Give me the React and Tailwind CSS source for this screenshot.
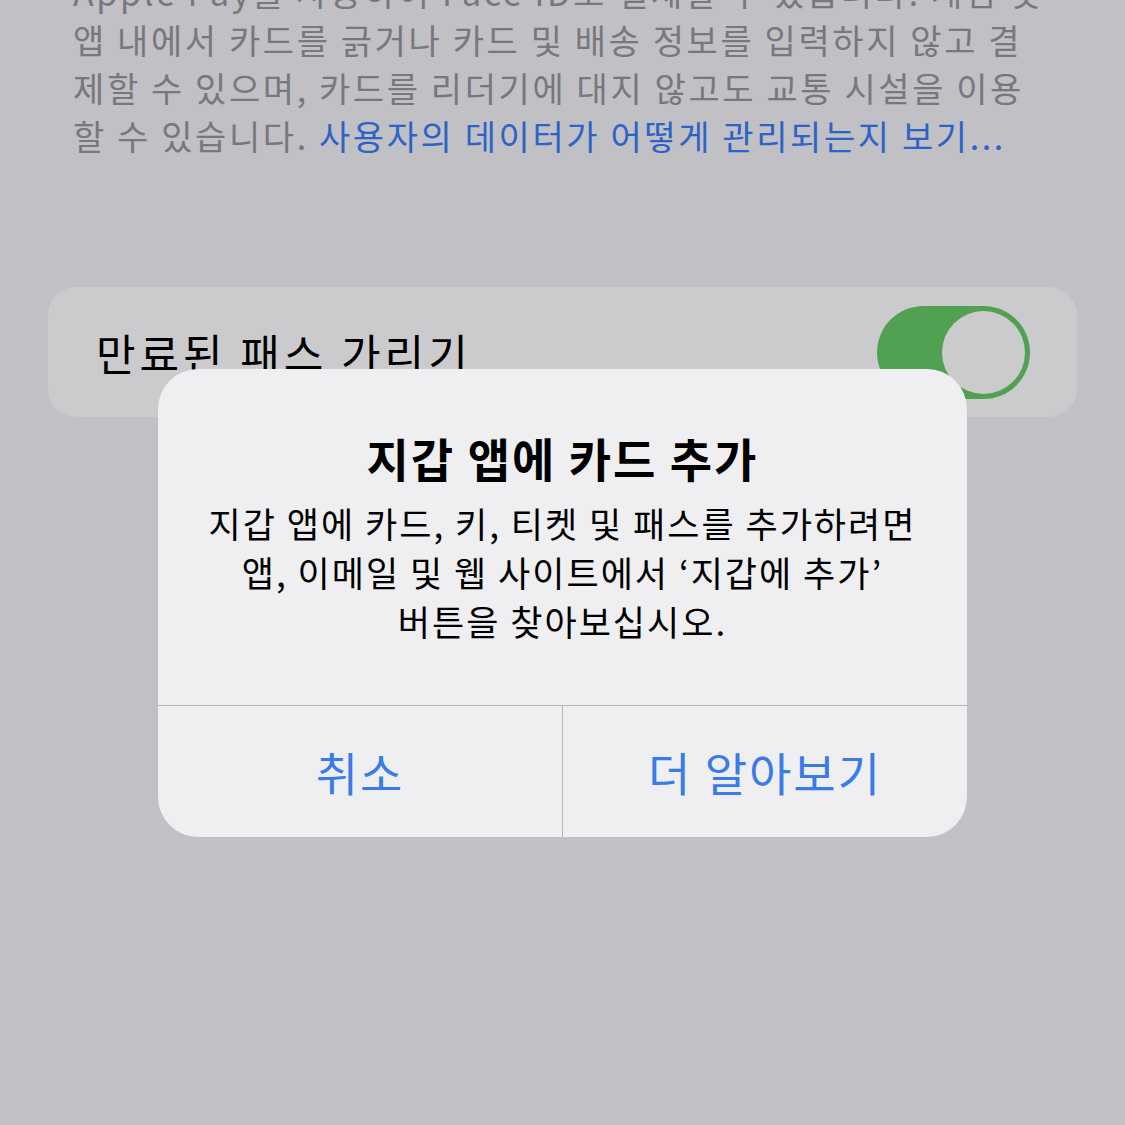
export default function App() {
  const font = { fontFamily: '"Noto Sans CJK KR", "Noto Sans", sans-serif' };
  return (
    <div className="relative h-[1125px] w-full overflow-hidden bg-[#c1c0c5]" style={font}>
      {/* footer description above the toggle group */}
      <div className="-mt-[32px] pl-[73px] text-[34px] leading-[48px] text-[#78787c] tracking-[2.6px] whitespace-nowrap">
        <div>Apple Pay를 사용하여 Face ID로 결제할 수 있습니다. 게임 및</div>
        <div>앱 내에서 카드를 긁거나 카드 및 배송 정보를 입력하지 않고 결</div>
        <div>제할 수 있으며, 카드를 리더기에 대지 않고도 교통 시설을 이용</div>
        <div>
          할 수 있습니다. <span className="text-[#2c63c6]">사용자의 데이터가 어떻게 관리되는지 보기...</span>
        </div>
      </div>

      {/* settings row */}
      <div className="mx-[48px] mt-[127px] flex h-[130px] items-center justify-between rounded-[28px] bg-[#cbcbcd] pl-[48px] pr-[47px]">
        <span className="text-[43px] tracking-[4px] text-black">만료된 패스 가리기</span>
        <div className="flex h-[93px] w-[153px] items-center justify-end rounded-full bg-[#52a052] pr-[5px]">
          <div className="h-[83px] w-[83px] rounded-full bg-[#cbcbcb]" />
        </div>
      </div>

      {/* alert */}
      <div className="absolute left-[158px] top-[369px] flex h-[468px] w-[809px] flex-col overflow-hidden rounded-[40px] bg-[#efeff1]">
        <div className="flex h-[336px] flex-col items-center pt-[59px] text-center">
          <div className="text-[46px] font-bold leading-[58px] tracking-[2px] text-black">지갑 앱에 카드 추가</div>
          <div className="mt-[12px] text-[35px] leading-[49px] tracking-[2px] text-black">
            <div>지갑 앱에 카드, 키, 티켓 및 패스를 추가하려면</div>
            <div>앱, 이메일 및 웹 사이트에서 ‘지갑에 추가’</div>
            <div>버튼을 찾아보십시오.</div>
          </div>
        </div>
        <div className="flex flex-1 border-t border-[#b5b5b8]">
          <div className="flex w-[405px] items-center justify-center border-r border-[#b5b5b8] text-[46px] tracking-[2px] text-[#3a7bea]">
            취소
          </div>
          <div className="flex flex-1 items-center justify-center text-[46px] tracking-[2px] text-[#3a7bea]">더 알아보기</div>
        </div>
      </div>
    </div>
  );
}
